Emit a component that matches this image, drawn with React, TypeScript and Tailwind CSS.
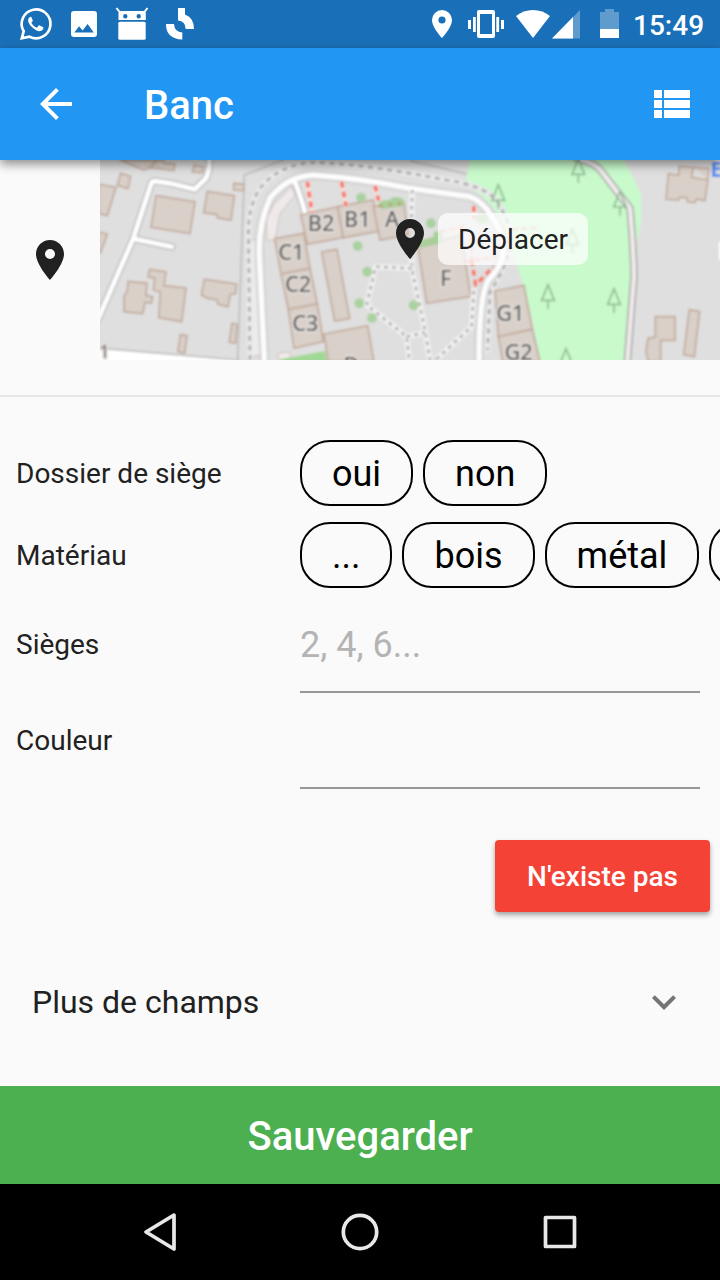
import React from "react";

const SANS = "font-['Roboto','Liberation_Sans',sans-serif]";
const PIN = "M12 2C8.13 2 5 5.13 5 9c0 5.25 7 13 7 13s7-7.75 7-13c0-3.87-3.13-7-7-7zm0 9.5a2.5 2.5 0 1 1 0-5 2.5 2.5 0 0 1 0 5z";

function Pin({ className }: { className: string }) {
  return (
    <svg viewBox="0 0 24 24" className={className} fill="currentColor">
      <path d={PIN} />
    </svg>
  );
}

function StatusBar() {
  return (
    <div className="h-12 bg-[#1a70b8] shrink-0">
      <div className="flex h-12 items-center">
        <svg className="block h-12 w-[220px]" viewBox="0 0 220 48" fill="#fff">
          <path d="M21.8 38.3 23.7 31.2A14.4 14.4 0 1 1 29.4 36.6Z" fill="none" stroke="#fff" strokeWidth="2.7" strokeLinejoin="miter" />
          <path d="M30.7 16.8c-.8-.1-2.7 1.6-2.6 3.6.1 2.3 2 4.9 4.3 7.1 2.6 2.4 5.7 3.9 7.7 3.6 1.9-.2 3.2-1.7 3.3-3 .1-.6-.1-.9-.5-1.1l-3.3-1.6c-.5-.2-.8-.1-1.1.3l-1.2 1.5c-.3.3-.6.4-1 .2-2-.9-3.6-2.3-4.7-4.2-.2-.4-.2-.6.1-.9l.9-1.1c.3-.3.3-.6.1-1l-1.3-3c-.2-.4-.4-.4-.7-.4z" />
          <path fillRule="evenodd" d="M74 11h20a3 3 0 0 1 3 3v20a3 3 0 0 1-3 3H74a3 3 0 0 1-3-3V14a3 3 0 0 1 3-3zm.3 21.5h19.5l-6.2-8.5-5 6.4-3.5-4.2z" />
          <path d="m116.5 8 3.5 4.5M147.500 8l-3.5 4.5" stroke="#fff" strokeWidth="2" />
          <path fillRule="evenodd" d="M121 11h22.500q2.300 0 2.300 2.300v6.700h-27.300v-6.700q0-2.300 2.500-2.300zm4.300 3a2.200 2.200 0 1 0 0 4.400 2.200 2.200 0 0 0 0-4.400zm13.400 0a2.200 2.200 0 1 0 0 4.400 2.200 2.200 0 0 0 0-4.400z" />
          <rect x="118.3" y="21.8" width="27.4" height="18" rx="1.5" />
          <path d="M178 8h7v6.500Q194 18 194 29h-8.300Q185.500 21 178 20.500z" />
          <path d="M166 24h8Q174.500 32 182.300 32.500v7Q166 39 166 24z" />
        </svg>
        <svg className="ml-auto block h-12 w-[206px]" viewBox="426 0 206 48" fill="#fff">
          <path d="M442 10a10 10 0 0 0-10 10c0 7.400 10 18 10 18s10-10.600 10-18a10 10 0 0 0-10-10zm0 13.600a3.600 3.600 0 1 1 0-7.200 3.600 3.600 0 0 1 0 7.200z" />
          <path fillRule="evenodd" d="M479 10h14a2 2 0 0 1 2 2v24a2 2 0 0 1-2 2h-14a2 2 0 0 1-2-2V12a2 2 0 0 1 2-2zm1 4v20h12V14zM468 20h3v9h-3zM473 17h2.800v15H473zM496.300 17h2.800v15h-2.800zM501 20h3v9h-3z" />
          <path d="M516 16a27 27 0 0 1 34 0L533 38z" />
          <path d="M580 10v28.500h-28z" fillOpacity=".3" />
          <path d="M573 17v21.500h-21z" />
          <path d="M605 9h9v3h5v17h-19V12h5z" fillOpacity=".3" />
          <path d="M600 29h19v9h-19z" />
        </svg>
        <span className="w-[88px] pl-[1px] pt-[4px] text-[28px] leading-8 font-medium text-white">15:49</span>
      </div>
    </div>
  );
}

function AppBar() {
  return (
    <header className="relative z-10 flex h-28 shrink-0 items-center bg-[#2196f3] pl-8 pr-6 text-white shadow-[0_4px_10px_rgba(0,0,0,0.45)]">
      <svg viewBox="0 0 24 24" className="size-12" fill="currentColor">
        <path d="M20 11H7.830l5.590-5.590L12 4l-8 8 8 8 1.410-1.410L7.830 13H20v-2z" />
      </svg>
      <h1 className="ml-16 pt-[4px] text-[40px] leading-12 font-medium">Banc</h1>
      <svg viewBox="0 0 24 24" className="ml-auto size-12" fill="currentColor">
        <path d="M3 9h4V5H3v4zm0 5h4v-4H3v4zm5 0h13v-4H8v4zM8 9h13V5H8v4zm-5 10h4v-4H3v4zm5 0h13v-4H8v4z" />
      </svg>
    </header>
  );
}

const ROAD_MAIN =
  "M493 600 L478 285 Q475 190 510 115 Q560 50 640 45 Q780 55 930 85 L1110 110 Q1150 125 1175 170 Q1215 220 1210 275 Q1205 320 1165 360 Q1137 410 1137 600";
const ROADS = [
  "M-6 478 L100 235 L154 70 Q158 62 170 64 L210 70 L284 88 L318 55 Q330 30 328 -5",
  "M104 237 L215 260",
  "M582 60 Q600 100 615 158",
];
const PATH_PARK = "M1430 -5 Q1490 10 1505 35 L1590 145 Q1600 250 1602 350 L1582 605";
const PATH_RING =
  "M450 600 L445 200 Q450 130 480 85 Q530 20 630 7 Q760 10 930 40 L1040 60 Q1140 75 1185 115 Q1240 200 1235 255 Q1215 330 1170 395 L1163 570";
const FOOTWAYS = [
  "M937 90 L934 180",
  "M932 262 L935 325 L970 485 L990 600",
  "M935 325 L827 320 L800 435 L920 530 L928 600",
  "M920 530 L975 518",
  "M1010 597 L1115 500 L1122 385",
];
const BUILDINGS = [
  "M60 0 L132 30 L148 22 L222 32 L225 12 L195 10 L190 0Z M148 27 L170 0",
  "M62 40 L92 50 L84 86 L52 76Z",
  "M-5 72 L48 82 L22 167 L-5 160Z",
  "M-5 216 L22 222 L2 278 L-5 278Z",
  "M168 107 L285 125 L270 221 L153 202Z",
  "M322 94 L403 107 L393 181 L352 173 L350 163 L311 158Z",
  "M283 15 L310 19 L307 38 L277 36Z",
  "M401 70 L433 73 L431 92 L401 90Z",
  "M85 364 L141 370 L138 407 L158 410 L154 429 L135 427 L128 461 L72 455 L72 407 L81 395Z",
  "M149 328 L198 336 L192 377 L258 384 L245 485 L176 473 L181 396 L160 390 L164 355 L144 350Z",
  "M313 358 L410 372 L406 402 L391 402 L384 440 L354 433 L351 420 L323 415 L304 405Z",
  "M241 524 L261 527 L254 579 L234 575Z",
  "M396 490 L411 493 L407 550 L388 546Z",
  "M602 165 L713 140 L730 233 L622 253Z",
  "M713 140 L820 120 L835 214 L730 233Z",
  "M820 140 L912 128 L925 225 L840 240Z",
  "M524 236 L612 220 L630 325 L543 342Z",
  "M543 342 L630 325 L652 432 L565 448Z",
  "M565 448 L652 432 L670 545 L582 565Z",
  "M665 276 L711 268 L749 476 L704 483Z",
  "M672 522 L803 497 L822 605 L685 605Z",
  "M954 263 L1084 225 L1112 410 L980 430Z",
  "M1185 393 L1272 376 L1297 508 L1195 530Z",
  "M1195 530 L1297 508 L1320 605 L1208 605Z",
  "M1737 18 L1827 25 L1823 63 L1815 122 L1789 117 L1785 128 L1763 126 L1760 112 L1740 112 L1736 120 L1698 118 L1705 41 L1736 46Z M1780 22 L1775 52 L1825 60",
  "M1666 470 L1725 470 L1725 541 L1682 541 L1682 605 L1645 605 L1638 575 L1644 535 L1666 531Z",
  "M1768 449 L1799 454 L1783 590 L1751 584Z",
];
const TREES: [number, number][] = [
  [1435, -8], [1195, 70], [1560, 90], [1417, 203], [1344, 370], [1542, 382], [1398, 562],
];
const BUSHES: [number, number][] = [
  [783, 113], [773, 258], [802, 335], [778, 430], [816, 474], [993, 190], [941, 436],
];
const LABELS: [string, number, number][] = [
  ["B2", 663, 213], ["B1", 772, 201], ["A", 876, 201], ["C1", 574, 301], ["C2", 594, 395],
  ["C3", 616, 512], ["F", 1037, 378], ["G1", 1231, 482], ["G2", 1256, 601], ["D", 754, 639],
];

function MapView() {
  return (
    <svg className="block h-[200px] w-[620px]" viewBox="0 0 1860 600">
      <defs>
        <filter id="tile" filterUnits="userSpaceOnUse" x="-20" y="-20" width="1900" height="640">
          <feGaussianBlur stdDeviation="2.7" />
        </filter>
      </defs>
      <rect width="1860" height="600" fill="#dfdfdf" />
      <g filter="url(#tile)">
        <rect x="-20" y="-20" width="1900" height="640" fill="#dfdfdf" />
        <path d="M1111 -20 H1560 Q1600 50 1624 105 V180 L1590 350 L1598 620 H1320 Q1300 450 1230 250 Q1200 130 1097 75Z" fill="#c8facc" />
        <path d="M-20 563 L415 600 V620 H-20Z" fill="#fff" stroke="#b5b5b5" strokeWidth="4" />
        <path d="M413 600 L433 45 L550 0 M930 2 L1100 42" fill="none" stroke="#b5b5b5" strokeWidth="4" />
        <path d="M500 240 L500 175 L520 135 L575 80 L585 105 L540 160 L525 240Z M450 240 H468 L482 588 H455Z M534 580 L570 576 V605 H536Z" fill="#eeeaea" stroke="#d8bcbc" strokeWidth="3" />
        <path d="M540 598 L675 573 L685 620 H540Z" fill="#a2d895" />

        <g fill="none" strokeLinejoin="round" strokeLinecap="round">
          <path d={PATH_RING} stroke="#e9e9e9" strokeWidth="18" />
          <path d={PATH_RING} stroke="#adadad" strokeWidth="8" strokeDasharray="15 14" strokeLinecap="butt" />
          <path d={ROAD_MAIN} stroke="#c2c2c2" strokeWidth="27" />
          {ROADS.map((d) => (
            <path key={d} d={d} stroke="#bebebe" strokeWidth="23" />
          ))}
          <path d={PATH_PARK} stroke="#aeabab" strokeWidth="23" />
          <path d={ROAD_MAIN} stroke="#ededed" strokeWidth="21" />
          <path d={ROAD_MAIN} stroke="#fff" strokeWidth="10" />
          {ROADS.map((d) => (
            <path key={d} d={d} stroke="#fff" strokeWidth="14" />
          ))}
          <path d={PATH_PARK} stroke="#efebeb" strokeWidth="13" />
        </g>

        {BUILDINGS.map((d) => (
          <path key={d} d={d} fill="#d9d0c9" stroke="#c2aa9b" strokeWidth="5" />
        ))}

        <g fill="none" strokeLinejoin="round">
          {FOOTWAYS.map((d) => (
            <g key={d}>
              <path d={d} stroke="#efefef" strokeWidth="18" />
              <path d={d} stroke="#a6a6a6" strokeWidth="7" strokeDasharray="10 14" />
            </g>
          ))}
          <path
            d="M622 65 L636 155 M725 65 L738 138 M825 77 L836 122 M1121 138 L1122 175"
            stroke="#f3e2df" strokeWidth="15"
          />
          <path
            d="M622 65 L636 158 M725 65 L738 138 M825 77 L836 122 M1121 138 L1122 175 M1115 300 L1127 375 L1180 320"
            stroke="#fa7565" strokeWidth="11" strokeDasharray="18 12"
          />
          <path d="M1020 215 L1100 198 M1095 305 L1190 290 M1235 209 L1320 203 M1115 230 L1115 300" stroke="#f5a39a" strokeWidth="7" strokeDasharray="18 10" />
        </g>

        <path d="M834 134 Q840 118 868 120 Q880 105 905 115 Q925 130 906 139 L845 148Z M950 245 L1000 230 L1002 215 L1028 215 L1028 250 L955 264Z" fill="#a9cf9a" />
        <path d="M838 138 L910 130" stroke="#c2905c" strokeWidth="6" strokeDasharray="10 18" />
        {BUSHES.map(([x, y]) => (
          <circle key={`${x}-${y}`} cx={x} cy={y} r="15" fill="#acd1a0" />
        ))}
        <ellipse cx="1147" cy="176" rx="20" ry="15" fill="#acd1a0" />
        {TREES.map(([x, y]) => (
          <path
            key={`${x}-${y}`}
            d={`M${x} ${y + 4} l-19 47 h38z M${x} ${y + 51} v26`}
            fill="none" stroke="#8fb98f" strokeWidth="5"
          />
        ))}

        <g
          fontFamily="'Noto Sans', sans-serif" fontSize="65" fontWeight="500" textAnchor="middle"
          fill="#555" stroke="#e2ddd9" strokeWidth="10" paintOrder="stroke" strokeLinejoin="round"
        >
          {LABELS.map(([t, x, y]) => (
            <text key={t} x={x} y={y}>{t}</text>
          ))}
          <text x="13" y="594" fontSize="54" fill="#777">1</text>
        </g>
        <text x="1831" y="50" fontFamily="'Noto Sans', sans-serif" fontSize="64" fontWeight="700" fill="#4d8cf2">E</text>
        <rect x="1857" y="245" width="13" height="55" fill="#fff" />
      </g>
    </svg>
  );
}

function Chip({ label, width }: { label: string; width: string }) {
  return (
    <button
      className={`flex h-[66px] shrink-0 items-center justify-center rounded-[30px] border-2 border-black pt-[2px] text-[36px] leading-[42px] text-black ${width}`}
    >
      {label}
    </button>
  );
}

function Row({ label, className, children }: { label: string; className: string; children: React.ReactNode }) {
  return (
    <div className={`flex shrink-0 items-center pl-4 ${className}`}>
      <span className="w-[284px] shrink-0 text-[28px] leading-8">{label}</span>
      {children}
    </div>
  );
}

export default function App() {
  return (
    <div className={`flex h-[1280px] w-[720px] flex-col overflow-hidden bg-[#fafafa] text-[#212121] ${SANS}`}>
      <StatusBar />
      <AppBar />

      <section className="flex h-[200px] shrink-0">
        <div className="flex w-[100px] items-center justify-center">
          <Pin className="size-12" />
        </div>
        <div className="relative w-[620px]">
          <MapView />
          <Pin className="absolute left-[286px] top-[55px] size-12" />
          <button className="absolute left-[338px] top-[53px] h-[52px] w-[150px] rounded-[10px] bg-white/70 pt-[2px] text-[28px] leading-8">
            Déplacer
          </button>
        </div>
      </section>

      <div className="mt-[35px] h-[2px] shrink-0 bg-[#e8e8e8]" />

      <form className="flex shrink-0 flex-col pt-[43px]">
        <Row label="Dossier de siège" className="h-[66px] [&>span]:pt-[2px]">
          <div className="flex gap-[10px]">
            <Chip label="oui" width="w-[113px]" />
            <Chip label="non" width="w-[124.400px]" />
          </div>
        </Row>
        <Row label="Matériau" className="mt-4 h-[66px] [&>span]:pt-[2px]">
          <div className="flex gap-[10px] overflow-hidden">
            <Chip label="..." width="w-[92.4px]" />
            <Chip label="bois" width="w-[132.2px]" />
            <Chip label="métal" width="w-[154.8px]" />
            <Chip label="" width="w-[155px]" />
          </div>
        </Row>
        <Row label="Sièges" className="mt-[9px] h-24 pr-5">
          <div className="flex h-24 grow items-center border-b-2 border-[#979797] pt-[2px] text-[36px] leading-[42px] text-[#b4b4b4]">
            2, 4, 6...
          </div>
        </Row>
        <Row label="Couleur" className="h-24 pr-5">
          <div className="h-24 grow border-b-2 border-[#979797]" />
        </Row>
      </form>

      <div className="mt-[51px] flex shrink-0 justify-end pr-[10px]">
        <button className="h-[72px] w-[215px] rounded-[4px] bg-[#f44336] pt-[2px] text-[28px] leading-8 font-medium text-white shadow-[0_3px_5px_rgba(0,0,0,0.35)]">
          N'existe pas
        </button>
      </div>

      <div className="mt-[42px] flex h-24 shrink-0 items-center justify-between pl-8 pr-8">
        <span className="text-[32px] leading-10">Plus de champs</span>
        <svg viewBox="0 0 24 24" className="size-12" fill="#757575">
          <path d="M16.590 8.590 12 13.170 7.410 8.590 6 10l6 6 6-6z" />
        </svg>
      </div>

      <button className="mt-auto h-[98px] shrink-0 bg-[#4caf50] pt-[4px] text-[40px] leading-12 font-medium text-white">
        Sauvegarder
      </button>

      <nav className="flex h-24 shrink-0 items-center bg-black px-[60px]">
        <svg viewBox="0 0 600 96" className="h-24 w-[600px]" fill="none" stroke="#e8e8e8" strokeWidth="3.7" strokeLinejoin="round">
          <path d="M114 31 86 48l28 17z" />
          <circle cx="300" cy="48" r="16.7" />
          <rect x="485.5" y="33.5" width="29" height="29" />
        </svg>
      </nav>
    </div>
  );
}
